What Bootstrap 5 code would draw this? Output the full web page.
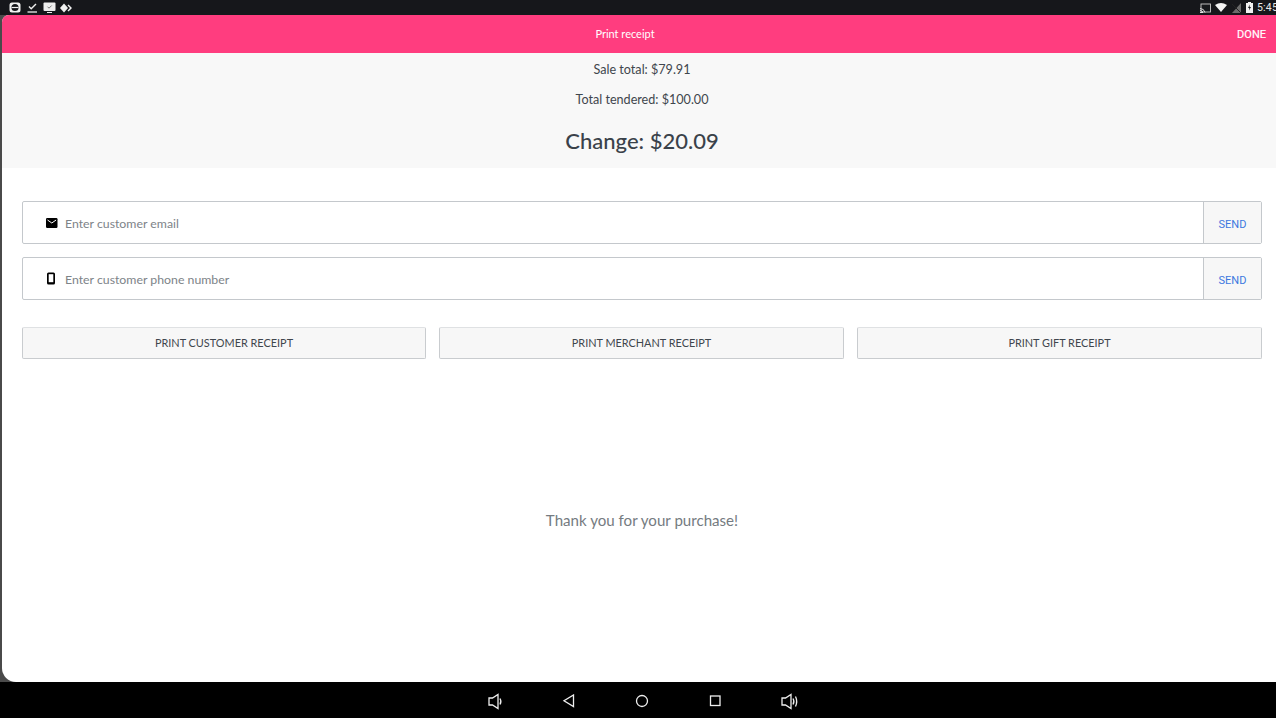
<!DOCTYPE html>
<html lang="en">
<head>
<meta charset="utf-8">
<title>Print receipt</title>
<link rel="stylesheet" href="https://cdn.jsdelivr.net/npm/bootstrap@5.3.0/dist/css/bootstrap.min.css">
<style>
html,body{height:718px;overflow:hidden;background:#000}
body{font-family:"Lato","Noto Sans",sans-serif;color:#3f464d}
.sys-top{height:15px;background:#16171b;color:#e8e8e8;padding:0 0 0 9px}
.sys-top .clock{font:10.5px "Roboto",sans-serif;margin-right:-2px;letter-spacing:.2px}
.gap-l{margin-right:6px}
.gap-m{margin-right:5px}
.gap-n{margin-right:4px}
.gap-w{margin-left:4px}
.gap-s{margin-left:5px}
.gap-b{margin-left:5px}
.shell{height:667px;background:#4a4a4a;padding-left:2px}
.screen{height:667px;background:#fff;border-radius:7px 0 0 14px;overflow:hidden}
.title-bar{height:38px;background:#ff3d7f;color:#fff;font-size:11px;position:relative}
.title-bar .ttl{width:1246px;text-align:center;padding-top:1px}
.title-bar .done{position:absolute;right:10px;top:13px;font:400 11px "Roboto",sans-serif;-webkit-text-stroke:.2px #fff}
.summary{height:115px;background:#f8f8f8;font-size:12.6px;padding-left:6px}
.summary p{margin:0;line-height:18px}
.summary .sale{padding-top:8px}
.summary .tender{padding-top:12px}
.summary .chg{font-size:22px;font-weight:500;line-height:30px;margin-top:17px;color:#3a424a}
.work{padding:33px 14px 0 20px}
.rowinp{height:43px;border:1px solid #c4c8cc;border-radius:2px;margin-bottom:13px;background:#fff}
.rowinp .ico{width:42px;padding-left:23px;flex:none}
.rowinp .in{flex:1;border:0;outline:0;padding:3px 0 0;background:transparent;font-size:12.3px;font-family:inherit;color:#333;min-width:0}
.rowinp .in::placeholder{color:#7d8388;opacity:1}
.sendbtn{width:58px;flex:none;background:#f7f7f7;border:0;border-left:1px solid #c4c8cc;color:#3d78e0;font:400 11px "Roboto",sans-serif;padding:3px 0 0;border-radius:0}
.printrow{margin-top:27px;gap:13px}
.printbtn{flex:1 1 0;height:32px;background:#f7f7f7;border:1px solid #c9cccf;border-top-color:#dfe1e3;border-radius:2px;font-size:10.9px;color:#3f464d;padding:0;font-family:inherit}
.printbtn.first{flex:0 0 404px}
.printbtn:hover{background:#f7f7f7;color:#3f464d}
.thanks{margin-top:151px;text-align:center;font-size:15.1px;line-height:20px;color:#757b81}
.sys-nav{height:36px;background:#000}
.sys-nav svg{position:absolute;top:12px}
.sys-nav svg.spk{top:11px}
</style>
</head>
<body>
<div class="sys-top d-flex align-items-center">
  <svg width="12" height="11" viewBox="0 0 12 11" class="gap-l"><rect x="0.5" y="0.5" width="11" height="10" rx="2.5" fill="#f2f2f2"/><circle cx="6" cy="5.5" r="3.6" fill="#16171b"/><path d="M2.5 5.500h7" stroke="#f2f2f2" stroke-width="1.2"/></svg>
  <svg width="11" height="11" viewBox="0 0 11 11" class="gap-m"><path d="M2 4.500l2.200 2.200L9 2" fill="none" stroke="#eee" stroke-width="1.400"/><path d="M0.500 10h9.500" stroke="#eee" stroke-width="1.300"/></svg>
  <svg width="13" height="11" viewBox="0 0 13 11" class="gap-n"><rect x="0.5" y="0.5" width="12" height="8.5" rx="1" fill="#eee"/><path d="M4 10.500h5" stroke="#eee"/><path d="M4.500 4.700l1.500 1.500 2.700-2.700" fill="none" stroke="#777" stroke-width="1"/></svg>
  <svg width="12" height="10" viewBox="0 0 12 10"><path d="M4 0.500L8 5 4 9.500 0 5z" fill="#f2f2f2"/><path d="M8.500 1.500L12 5 8.500 8.500L7.500 7.500 10 5 7.500 2.500z" fill="#f2f2f2"/></svg>
  <div class="ms-auto d-flex align-items-center">
    <svg width="11" height="10" viewBox="0 0 11 10"><rect x="1" y="1" width="9.500" height="8" fill="none" stroke="#ccc" stroke-width=".9"/><path d="M0 9.500h3M0 7.500q2.500 0 3 2M0 5.500q4 0 5 4" fill="none" stroke="#eee" stroke-width=".9"/></svg>
    <svg width="12" height="9" viewBox="0 0 12 9" class="gap-w"><path d="M0 2Q6-1.800 12 2L6 9z" fill="#f4f4f4"/></svg>
    <svg width="9" height="10" viewBox="0 0 9 10" class="gap-s"><path d="M9 0v10H0z" fill="#6a6a6a"/><path d="M0 1l9 9" stroke="#222"/></svg>
    <svg width="7" height="11" viewBox="0 0 7 11" class="gap-b"><path d="M2 0h3v1h2v10H0V1h2z" fill="#f2f2f2"/><path d="M3.800 2.500L2 6h1.300l-.3 2.500L5 5H3.600z" fill="#16171b"/></svg>
    <span class="clock gap-w">5:45</span>
  </div>
</div>
<div class="shell">
  <div class="screen d-flex flex-column">
    <div class="title-bar d-flex align-items-center">
      <div class="ttl">Print receipt</div>
      <span class="done">DONE</span>
    </div>
    <div class="summary text-center">
      <p class="sale">Sale total: $79.91</p>
      <p class="tender">Total tendered: $100.00</p>
      <p class="chg">Change: $20.09</p>
    </div>
    <div class="work">
      <div class="rowinp d-flex align-items-stretch">
        <div class="ico d-flex align-items-center">
          <svg width="12" height="10" viewBox="0 0 12 10"><rect width="11.500" height="10" rx="1.200" fill="#000"/><path d="M1.500 2l4.300 3 4.300-3" fill="none" stroke="#fff" stroke-width="1"/></svg>
        </div>
        <input class="in" type="text" placeholder="Enter customer email">
        <button class="sendbtn" type="button">SEND</button>
      </div>
      <div class="rowinp d-flex align-items-stretch">
        <div class="ico d-flex align-items-center">
          <svg width="12" height="13" viewBox="0 0 12 13"><rect x="1" y="0.500" width="8" height="12" rx="1.500" fill="#000"/><rect x="2.700" y="2.200" width="4.600" height="8" fill="#fff"/></svg>
        </div>
        <input class="in" type="text" placeholder="Enter customer phone number">
        <button class="sendbtn" type="button">SEND</button>
      </div>
      <div class="printrow d-flex">
        <button class="btn printbtn first" type="button">PRINT CUSTOMER RECEIPT</button>
        <button class="btn printbtn" type="button">PRINT MERCHANT RECEIPT</button>
        <button class="btn printbtn" type="button">PRINT GIFT RECEIPT</button>
      </div>
      <p class="thanks mb-0">Thank you for your purchase!</p>
    </div>
  </div>
</div>
<div class="sys-nav position-relative">
  <svg class="spk" style="left:488px" width="15" height="17" viewBox="0 0 15 17" fill="none" stroke="#eee" stroke-width="1.300"><path d="M1 5h3.500L10 1.500v14L4.500 12H1z"/><path d="M12 5.500q1.800 3 0 6"/></svg>
  <svg style="left:562px" width="13" height="14" viewBox="0 0 13 14" fill="none" stroke="#eee" stroke-width="1.300"><path d="M11.500 1v11.500L2 6.800z"/></svg>
  <svg style="left:635px" width="14" height="14" viewBox="0 0 14 14" fill="none" stroke="#eee" stroke-width="1.300"><circle cx="7" cy="7" r="5.500"/></svg>
  <svg style="left:709px" width="13" height="14" viewBox="0 0 13 14" fill="none" stroke="#eee" stroke-width="1.300"><rect x="1.500" y="2" width="9.500" height="9.500"/></svg>
  <svg class="spk" style="left:781px" width="18" height="17" viewBox="0 0 18 17" fill="none" stroke="#eee" stroke-width="1.300"><path d="M1 5h3.500L10 1.500v14L4.500 12H1z"/><path d="M12 5.500q1.800 3 0 6M14.500 3.500q2.400 5 0 10"/></svg>
</div>
<script src="https://cdn.jsdelivr.net/npm/bootstrap@5.3.0/dist/js/bootstrap.bundle.min.js"></script>
</body>
</html>
